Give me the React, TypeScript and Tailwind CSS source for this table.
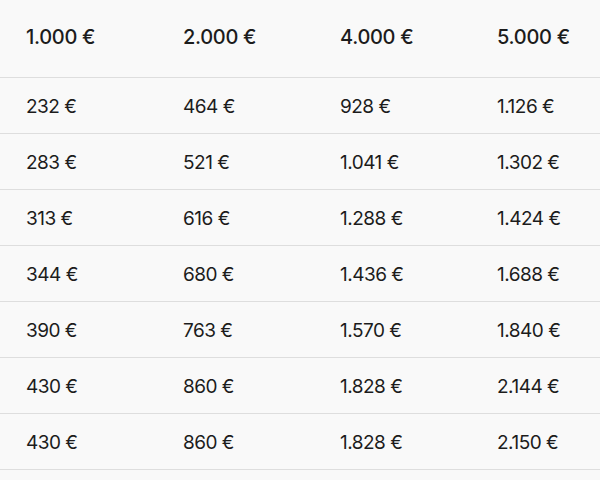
const header = ["1.000 €", "2.000 €", "4.000 €", "5.000 €"];

const rows = [
  ["232 €", "464 €", "928 €", "1.126 €"],
  ["283 €", "521 €", "1.041 €", "1.302 €"],
  ["313 €", "616 €", "1.288 €", "1.424 €"],
  ["344 €", "680 €", "1.436 €", "1.688 €"],
  ["390 €", "763 €", "1.570 €", "1.840 €"],
  ["430 €", "860 €", "1.828 €", "2.144 €"],
  ["430 €", "860 €", "1.828 €", "2.150 €"],
];

export default function App() {
  return (
    <div
      className="w-[600px] h-[480px] overflow-hidden bg-[#f9f9f9] text-[#1c1c1c]"
      style={{ fontFamily: "Inter, 'Noto Sans', sans-serif" }}
    >
      <div className="w-[660px]">
        <div className="grid grid-cols-[157px_157px_157px_157px] h-[78px] items-center pl-[26px] border-b border-[#dedede] pb-[4px]">
          {header.map((h) => (
            <div key={h} className="text-[20px] font-medium tracking-[-0.3px]">
              {h}
            </div>
          ))}
        </div>
        {rows.map((r, i) => (
          <div
            key={i}
            className="grid grid-cols-[157px_157px_157px_157px] h-[56px] items-center pl-[26px] pt-[3px] border-b border-[#dedede]"
          >
            {r.map((c, j) => (
              <div key={j} className="text-[19px] font-normal tracking-[-0.5px]">
                {c}
              </div>
            ))}
          </div>
        ))}
      </div>
    </div>
  );
}
